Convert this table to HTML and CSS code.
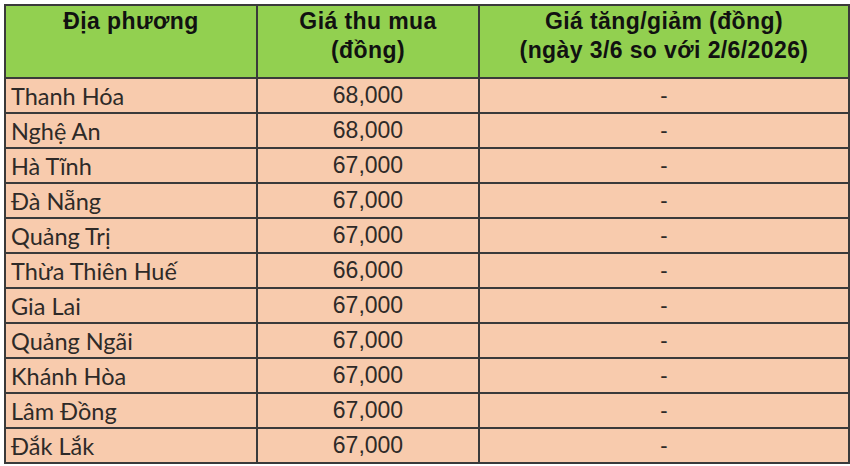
FILE: index.html
```html
<!DOCTYPE html>
<html lang="vi">
<head>
<meta charset="utf-8">
<title>Giá thu mua</title>
<link rel="stylesheet" href="styles.css">
</head>
<body>
<div class="sheet">
  <table class="price-table">
    <colgroup>
      <col class="c1">
      <col class="c2">
      <col class="c3">
    </colgroup>
    <thead>
      <tr>
        <th>Địa phương</th>
        <th>Giá thu mua<br>(đồng)</th>
        <th>Giá tăng/giảm (đồng)<br>(ngày 3/6 so với 2/6/2026)</th>
      </tr>
    </thead>
    <tbody>
      <tr><td class="name">Thanh Hóa</td><td class="num">68,000</td><td class="chg">-</td></tr>
      <tr><td class="name">Nghệ An</td><td class="num">68,000</td><td class="chg">-</td></tr>
      <tr><td class="name">Hà Tĩnh</td><td class="num">67,000</td><td class="chg">-</td></tr>
      <tr><td class="name">Đà Nẵng</td><td class="num">67,000</td><td class="chg">-</td></tr>
      <tr><td class="name">Quảng Trị</td><td class="num">67,000</td><td class="chg">-</td></tr>
      <tr><td class="name">Thừa Thiên Huế</td><td class="num">66,000</td><td class="chg">-</td></tr>
      <tr><td class="name">Gia Lai</td><td class="num">67,000</td><td class="chg">-</td></tr>
      <tr><td class="name">Quảng Ngãi</td><td class="num">67,000</td><td class="chg">-</td></tr>
      <tr><td class="name">Khánh Hòa</td><td class="num">67,000</td><td class="chg">-</td></tr>
      <tr><td class="name">Lâm Đồng</td><td class="num">67,000</td><td class="chg">-</td></tr>
      <tr><td class="name">Đắk Lắk</td><td class="num">67,000</td><td class="chg">-</td></tr>
    </tbody>
  </table>
</div>
</body>
</html>
```

FILE: styles.css
```css
html, body {
  margin: 0;
  padding: 0;
  background: #ffffff;
}

.sheet {
  width: 850px;
  height: 466px;
  box-sizing: border-box;
  padding: 4px 2px 0 4px;
  overflow: hidden;
}

.price-table {
  width: 844px;
  border-collapse: collapse;
  table-layout: fixed;
  border: 2px solid #3a3a3a;
}

.c1 { width: 252px; }
.c2 { width: 222px; }
.c3 { width: 370px; }

.price-table th {
  background: #92d050;
  color: #111111;
  font-family: "Liberation Sans", Arial, sans-serif;
  font-weight: bold;
  font-size: 23px;
  letter-spacing: 0.4px;
  line-height: 29px;
  height: 70px;
  padding: 1px 0 0 0;
  vertical-align: top;
  text-align: center;
  border: 2px solid #3a3a3a;
}

.price-table td {
  background: #f8cbad;
  color: #2e2a28;
  height: 33px;
  padding: 0;
  border: 2px solid #3a3a3a;
  vertical-align: middle;
}

.price-table td.name {
  font-family: Lato, "Liberation Sans", sans-serif;
  font-size: 23.5px;
  padding-left: 5px;
  text-align: left;
}

.price-table td.num {
  font-family: "Liberation Sans", Arial, sans-serif;
  font-size: 23px;
  text-align: center;
}

.price-table td.chg {
  font-family: "Liberation Sans", Arial, sans-serif;
  font-size: 22px;
  text-align: center;
}
```
